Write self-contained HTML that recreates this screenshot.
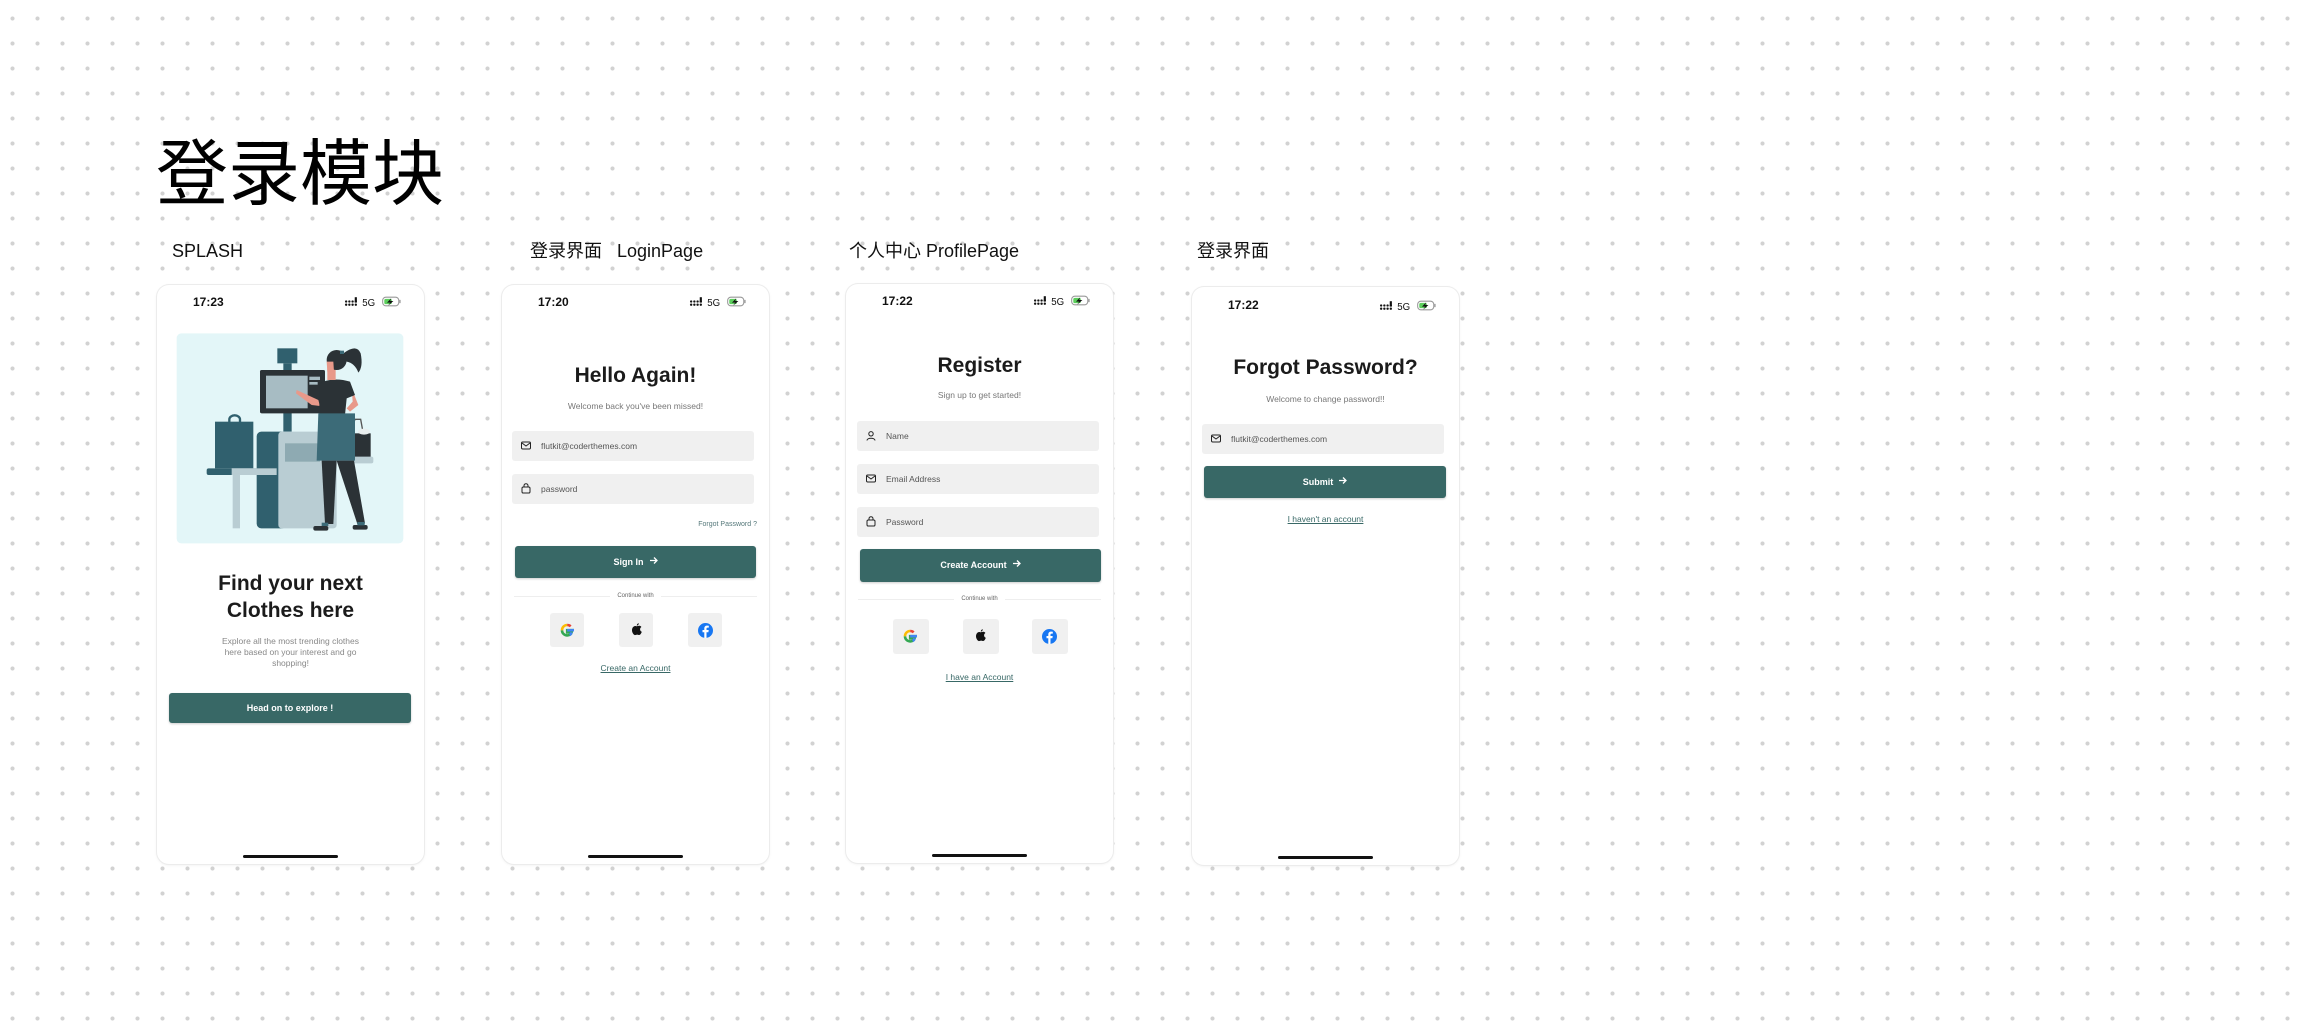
<!DOCTYPE html>
<html><head><meta charset="utf-8"><style>
*{margin:0;padding:0;box-sizing:border-box}
body{width:2300px;height:1032px;overflow:hidden;background:#fff;font-family:"Liberation Sans","Noto Sans CJK SC",sans-serif;position:relative;
background-image:radial-gradient(circle,#d2d2d2 1.8px,transparent 2.3px);background-size:25px 25px;background-position:0px 6px}
.a{position:absolute}
.title{left:156px;top:128px;font-size:72px;line-height:80px;color:#000;font-family:"Noto Sans CJK SC",sans-serif;white-space:nowrap}
.lbl{font-size:18px;line-height:22px;color:#111;white-space:nowrap;font-family:"Liberation Sans","Noto Sans CJK SC",sans-serif;top:240px}
.ph{position:absolute;width:267px;height:579px;background:#fff;border-radius:12px;box-shadow:0 0 0 1px #ececec,0 1px 3px rgba(0,0,0,.08)}
.time{position:absolute;left:36px;top:10px;font-size:12px;font-weight:bold;color:#111}
.st{position:absolute;right:22px;top:10px;width:58px;height:13px}
.h1{position:absolute;left:0;width:100%;text-align:center;font-weight:bold;color:#1b1b1b;font-size:21px}
.sub{position:absolute;left:0;width:100%;text-align:center;font-size:8.5px;color:#777}
.inp{position:absolute;background:#f0f0f0;border-radius:3px;height:30px;font-size:8.5px;color:#555;line-height:30px;padding-left:29px}
.inp svg{position:absolute;left:9px;top:10px}
.btn{position:absolute;background:#386866;border-radius:3px;color:#fff;font-size:9px;font-weight:bold;text-align:center;box-shadow:0 1px 2px rgba(0,0,0,.2)}
.home{position:absolute;height:3px;background:#111;border-radius:2px;width:95px;bottom:6px}
.cw{position:absolute;font-size:6px;color:#666;text-align:center;width:100%}
.cw:before,.cw:after{content:"";position:absolute;top:3px;height:1px;background:#eee;width:96px}
.cw:before{left:12px}.cw:after{right:12px}
.soc{position:absolute;width:34px;height:34px;background:#f0f0f0;border-radius:3px}
.soc svg{position:absolute;left:9px;top:9px}
.lnk{position:absolute;left:0;width:100%;text-align:center;font-size:8.5px;color:#386866;text-decoration:underline}
</style></head><body>
<div class="a title">登录模块</div>
<div class="a lbl" style="left:172px">SPLASH</div>
<div class="a lbl" style="left:530px">登录界面&nbsp;&nbsp;&nbsp;LoginPage</div>
<div class="a lbl" style="left:849px">个人中心 ProfilePage</div>
<div class="a lbl" style="left:1197px">登录界面</div>

<svg width="0" height="0" style="position:absolute"><defs>
<g id="stat"><circle cx="2" cy="6" r="1.1" fill="#111"/><circle cx="5" cy="6" r="1.1" fill="#111"/><circle cx="8" cy="6" r="1.1" fill="#111"/><circle cx="11" cy="6" r="1.1" fill="#111"/><circle cx="5" cy="9" r="1.1" fill="#111"/><circle cx="8" cy="9" r="1.1" fill="#111"/><circle cx="11" cy="9" r="1.1" fill="#111"/><circle cx="2" cy="9" r="1.1" fill="#111"/><rect x="10" y="2" width="2" height="5" fill="#111"/><text x="17" y="10" font-size="9" font-family="Liberation Sans" fill="#111">5G</text><rect x="36" y="2" width="15" height="8" rx="3" fill="none" stroke="#999" stroke-width="1"/><rect x="37.5" y="3.5" width="7" height="5" rx="1.5" fill="#5ccf5c"/><path d="M44 3 L40 7 L43 7 L41 10 L46 5.5 L43 5.5 Z" fill="#111"/><rect x="51.5" y="4.5" width="1.2" height="3" fill="#999"/></g>
<g id="mail"><rect x="0.5" y="0.5" width="9" height="7" rx="1.2" fill="none" stroke="#222" stroke-width="1"/><path d="M1 1.5 L5 4.5 L9 1.5" fill="none" stroke="#222" stroke-width="1"/></g>
<g id="lock"><rect x="1" y="4" width="8" height="6" rx="1.3" fill="none" stroke="#222" stroke-width="1"/><path d="M3 4 V2.7 a2 2 0 0 1 4 0 V4" fill="none" stroke="#222" stroke-width="1"/></g>
<g id="user"><circle cx="5" cy="2.8" r="2.2" fill="none" stroke="#222" stroke-width="1"/><path d="M1 9.5 C1 6.5 9 6.5 9 9.5" fill="none" stroke="#222" stroke-width="1"/></g>
<g id="goog"><path d="M15 8.2 H8.2 V10.4 H12.6 C12.2 12.2 10.5 13.4 8.2 13.4 C5.3 13.4 3 11.1 3 8.2" fill="none" stroke="#34a853" stroke-width="2.6"/><path d="M3 8.2 C3 5.3 5.3 3 8.2 3" fill="none" stroke="#fbbc05" stroke-width="2.6"/><path d="M8.2 3 C9.6 3 10.8 3.5 11.7 4.3" fill="none" stroke="#ea4335" stroke-width="2.6"/><path d="M15 8.2 H8.2" fill="none" stroke="#4285f4" stroke-width="2.6"/><path d="M12.6 10.4 C12.2 11.7 11.5 12.5 10.6 12.9" fill="none" stroke="#4285f4" stroke-width="2.6"/></g>
<g id="appl"><path d="M8.6 4.3 C9.5 4.3 10.5 3.7 11.4 3.8 C12.3 3.9 13 4.3 13.4 5 C12.3 5.7 12 6.7 12.1 7.6 C12.2 8.7 12.9 9.4 13.8 9.8 C13.4 11.1 12.5 12.8 11.4 13 C10.6 13.1 10.3 12.6 9.2 12.6 C8.1 12.6 7.7 13.1 6.9 13.1 C5.7 13 4 10.6 4 8.3 C4 5.6 5.7 4.1 7.1 4 C7.8 4 8.1 4.3 8.6 4.3 Z M10.8 1.2 C10.9 2.2 10.2 3.5 8.8 3.6 C8.7 2.5 9.5 1.4 10.8 1.2 Z" fill="#111"/></g>
<g id="fb"><circle cx="8.5" cy="8.5" r="7.5" fill="#1877f2"/><path d="M9.5 16 V10.2 H11.4 L11.7 8 H9.5 V6.7 C9.5 6 9.8 5.6 10.7 5.6 H11.8 V3.7 C11.4 3.6 10.8 3.6 10.1 3.6 C8.4 3.6 7.3 4.6 7.3 6.4 V8 H5.5 V10.2 H7.3 V16 Z" fill="#fff"/></g>
<g id="arr"><path d="M1 4.5 H8 M5 1.5 L8 4.5 L5 7.5" fill="none" stroke="#fff" stroke-width="1.3"/></g>
</defs></svg>

<!-- Phone 1 -->
<div class="ph" style="left:157px;top:285px">
  <div class="time" style="left:36px;top:10px">17:23</div>
  <svg class="st" viewBox="0 0 54 12"><use href="#stat"/></svg>
  <svg class="a" style="left:13px;top:45px" width="240" height="220" viewBox="0 0 720 660">
    <rect x="20" y="10" width="680" height="630" rx="14" fill="#e3f6f8"/>
    <rect x="322" y="55" width="60" height="45" fill="#30606e"/>
    <rect x="340" y="100" width="25" height="205" fill="#30606e"/>
    <rect x="270" y="120" width="195" height="130" rx="5" fill="#2b3236"/>
    <rect x="288" y="137" width="125" height="98" fill="#a7bcc3"/>
    <rect x="418" y="140" width="32" height="10" fill="#a7bcc3"/>
    <rect x="418" y="156" width="25" height="8" fill="#a7bcc3"/>
    <rect x="260" y="305" width="90" height="290" rx="14" fill="#30606e"/>
    <rect x="325" y="305" width="175" height="290" rx="10" fill="#b9cdd3"/>
    <rect x="345" y="340" width="105" height="55" fill="#8eaab2"/>
    <rect x="135" y="275" width="115" height="140" fill="#30606e"/>
    <path d="M178 278 V268 a16 12 0 0 1 32 0 V278" fill="none" stroke="#30606e" stroke-width="7"/>
    <rect x="110" y="415" width="210" height="20" rx="6" fill="#30606e"/>
    <rect x="185" y="415" width="135" height="20" fill="#b9cdd3"/>
    <rect x="188" y="430" width="22" height="165" fill="#b9cdd3"/>
    <path d="M540 312 L555 268 L572 268 L580 312" fill="none" stroke="#555" stroke-width="4"/>
    <rect x="545" y="310" width="57" height="72" fill="#2b3236"/>
    <ellipse cx="582" cy="305" rx="18" ry="9" fill="#e8eeee"/>
    <rect x="540" y="380" width="70" height="20" rx="6" fill="#b9cdd3"/>
    <path d="M380 180 L445 210 L450 228 L425 225 L378 190 Z" fill="#e8998a"/>
    <path d="M545 175 L565 225 L540 245 L530 235 L548 215 Z" fill="#e8998a"/>
    <path d="M448 160 Q490 140 540 155 L555 195 L530 205 L525 255 L448 255 Z" fill="#2b3236"/>
    <rect x="472" y="110" width="25" height="40" fill="#e8998a"/>
    <path d="M445 250 L555 250 L555 392 L440 392 Z" fill="#3c6b78"/>
    <path d="M455 392 L500 392 L490 582 L465 582 Z" fill="#2b3236"/>
    <path d="M500 392 L552 392 L585 580 L562 582 Z" fill="#2b3236"/>
    <rect x="430" y="588" width="45" height="14" rx="6" fill="#2b3236"/>
    <rect x="548" y="585" width="45" height="14" rx="6" fill="#2b3236"/>
    <rect x="455" y="578" width="20" height="10" fill="#3c6b78"/>
    <rect x="562" y="576" width="22" height="10" fill="#3c6b78"/>
    <circle cx="500" cy="90" r="30" fill="#2b3236"/>
    <path d="M520 70 Q560 40 572 70 Q580 110 565 128 Q555 100 530 95 Z" fill="#2b3236"/>
    <rect x="510" y="62" width="12" height="10" fill="#3c6b78"/>
    <path d="M470 95 L490 95 L492 125 L472 125 Z" fill="#e8998a"/>
  </svg>
  <div class="h1" style="top:285px;font-size:21px;line-height:27px">Find your next<br>Clothes here</div>
  <div class="sub" style="top:351px;line-height:11px;font-size:8.5px;color:#888;padding:0 56px">Explore all the most trending clothes here based on your interest and go shopping!</div>
  <div class="btn" style="left:12px;top:408px;width:242px;height:30px;line-height:30px">Head on to explore !</div>
  <div class="home" style="left:86px"></div>
</div>

<!-- Phone 2 -->
<div class="ph" style="left:502px;top:285px">
  <div class="time">17:20</div>
  <svg class="st" viewBox="0 0 54 12"><use href="#stat"/></svg>
  <div class="h1" style="top:77px;line-height:28px">Hello Again!</div>
  <div class="sub" style="top:116px">Welcome back you've been missed!</div>
  <div class="inp" style="left:10px;top:146px;width:242px"><svg width="10" height="9" viewBox="0 0 10 8"><use href="#mail"/></svg>flutkit@coderthemes.com</div>
  <div class="inp" style="left:10px;top:189px;width:242px"><svg width="10" height="11" viewBox="0 0 10 11" style="top:9px"><use href="#lock"/></svg>password</div>
  <div class="a" style="right:12px;top:236px;font-size:7px;color:#55787a">Forgot Password ?</div>
  <div class="btn" style="left:13px;top:261px;width:241px;height:32px;line-height:32px">Sign In &nbsp;<svg width="9" height="9" viewBox="0 0 9 9"><use href="#arr"/></svg></div>
  <div class="cw" style="top:308px">Continue with</div>
  <div class="soc" style="left:48px;top:328px"><svg width="17" height="17" viewBox="0 0 17 17"><use href="#goog"/></svg></div>
  <div class="soc" style="left:117px;top:328px"><svg width="17" height="17" viewBox="0 0 17 17"><use href="#appl"/></svg></div>
  <div class="soc" style="left:186px;top:328px"><svg width="17" height="17" viewBox="0 0 17 17"><use href="#fb"/></svg></div>
  <div class="lnk" style="top:378px">Create an Account</div>
  <div class="home" style="left:86px"></div>
</div>

<!-- Phone 3 -->
<div class="ph" style="left:846px;top:284px">
  <div class="time">17:22</div>
  <svg class="st" viewBox="0 0 54 12"><use href="#stat"/></svg>
  <div class="h1" style="top:68px;line-height:28px">Register</div>
  <div class="sub" style="top:106px">Sign up to get started!</div>
  <div class="inp" style="left:11px;top:137px;width:242px"><svg width="10" height="10" viewBox="0 0 10 10"><use href="#user"/></svg>Name</div>
  <div class="inp" style="left:11px;top:180px;width:242px"><svg width="10" height="9" viewBox="0 0 10 8"><use href="#mail"/></svg>Email Address</div>
  <div class="inp" style="left:11px;top:223px;width:242px"><svg width="10" height="11" viewBox="0 0 10 11" style="top:9px"><use href="#lock"/></svg>Password</div>
  <div class="btn" style="left:14px;top:265px;width:241px;height:33px;line-height:33px">Create Account &nbsp;<svg width="9" height="9" viewBox="0 0 9 9"><use href="#arr"/></svg></div>
  <div class="cw" style="top:312px">Continue with</div>
  <div class="soc" style="left:47px;top:335px;width:36px;height:35px"><svg width="17" height="17" viewBox="0 0 17 17"><use href="#goog"/></svg></div>
  <div class="soc" style="left:117px;top:335px;width:36px;height:35px"><svg width="17" height="17" viewBox="0 0 17 17"><use href="#appl"/></svg></div>
  <div class="soc" style="left:186px;top:335px;width:36px;height:35px"><svg width="17" height="17" viewBox="0 0 17 17"><use href="#fb"/></svg></div>
  <div class="lnk" style="top:388px">I have an Account</div>
  <div class="home" style="left:86px"></div>
</div>

<!-- Phone 4 -->
<div class="ph" style="left:1192px;top:287px;height:578px">
  <div class="time" style="top:11px">17:22</div>
  <svg class="st" viewBox="0 0 54 12" style="top:12px"><use href="#stat"/></svg>
  <div class="h1" style="top:67px;line-height:28px">Forgot Password?</div>
  <div class="sub" style="top:107px">Welcome to change password!!</div>
  <div class="inp" style="left:10px;top:137px;width:242px"><svg width="10" height="9" viewBox="0 0 10 8"><use href="#mail"/></svg>flutkit@coderthemes.com</div>
  <div class="btn" style="left:12px;top:179px;width:242px;height:32px;line-height:32px">Submit &nbsp;<svg width="9" height="9" viewBox="0 0 9 9"><use href="#arr"/></svg></div>
  <div class="lnk" style="top:227px">I haven't an account</div>
  <div class="home" style="left:86px"></div>
</div>
</body></html>
